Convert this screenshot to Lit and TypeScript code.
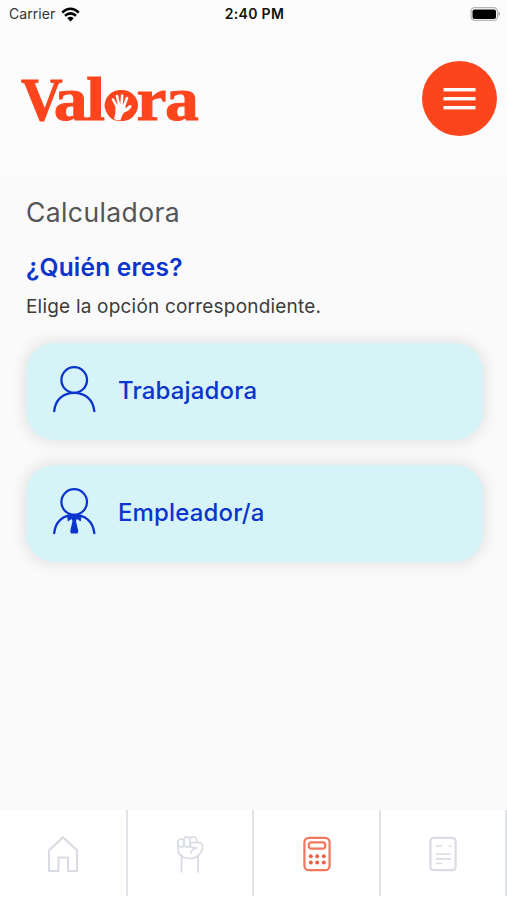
import { LitElement, html, css, svg } from "lit";
import { customElement } from "lit/decorators.js";

const BLUE = "#0b35cc";

const person = svg`
  <circle cx="22.2" cy="14" r="12.8" />
  <path d="M2.2 45.2C3.2 33.5 11.5 26.8 22.2 26.8S41.2 33.5 42.3 45.2" />`;

const tie = svg`
  <path d="M15 27.2L19.3 26.5 22.2 28 25.2 26.5 29.5 27.2 28.800 33.500 24.800 31 24 33 26.300 43.200 25.500 45.500H19L18.200 43.200 20.500 33 19.600 31 15.800 33.500Z" fill=${BLUE} stroke="none" />`;

@customElement("app-root")
export class AppRoot extends LitElement {
  static styles = css`
    :host {
      display: flex;
      flex-direction: column;
      width: 507px;
      height: 900px;
      overflow: hidden;
      background: #fafafa;
      font-family: Inter, "Liberation Sans", sans-serif;
      white-space: nowrap;
    }
    svg { display: block; flex: none; }
    .status {
      display: grid;
      grid-template-columns: 1fr auto 1fr;
      align-items: center;
      height: 28px;
      padding: 0 6px 0 9px;
      background: #fcfcfc;
      color: #111;
      font-size: 14px;
      line-height: 28px;
    }
    .carrier { display: flex; align-items: center; gap: 6px; color: #333; }
    .carrier-name { letter-spacing: 0.05px; }
    .time { margin-right: 1px; font-weight: 600; letter-spacing: 0.3px; }
    .battery { justify-self: end; }
    header {
      display: flex;
      justify-content: space-between;
      height: 148px;
      box-sizing: border-box;
      padding: 33px 10px 0 16px;
      background: #fcfcfc;
    }
    .wordmark {
      font-family: "Liberation Serif", serif;
      font-weight: 700;
      font-size: 62px;
      fill: #fd451d;
      stroke: #fd451d;
      stroke-width: 1;
    }
    .menu {
      display: flex;
      align-items: center;
      justify-content: center;
      width: 75px;
      height: 75px;
      border: 0;
      padding: 0;
      border-radius: 50%;
      background: #fd451d;
    }
    main { flex: 1; padding: 0 24px 0 26px; }
    h1, h2, p { margin: 0; }
    h1 {
      padding-top: 19px;
      font-size: 26.5px;
      line-height: 34px;
      font-weight: 400;
      letter-spacing: 0.4px;
      color: #555;
    }
    h2 {
      margin-top: 22px;
      font-size: 24.5px;
      line-height: 32px;
      font-weight: 600;
      letter-spacing: 0.2px;
      color: #0b35cc;
    }
    p {
      margin-top: 12px;
      font-size: 19px;
      line-height: 24px;
      letter-spacing: 0.2px;
      color: #3c3c3c;
    }
    .options { display: flex; flex-direction: column; gap: 25px; margin-top: 23.5px; }
    .option {
      display: flex;
      align-items: center;
      gap: 21px;
      height: 97px;
      padding: 0 0 0 26px;
      border: 0;
      border-radius: 28px;
      background: #d6f3f7;
      box-shadow: 0 0 14px 3px rgba(0, 0, 0, 0.09);
      color: #0b35cc;
      font: 500 24px/30px Inter, "Liberation Sans", sans-serif;
      letter-spacing: 0.15px;
    }
    .option svg { margin-bottom: 3px; }
    nav {
      display: grid;
      grid-template-columns: 128px 126px 127px 126px;
      height: 90px;
      background: #fff;
    }
    .tab {
      display: flex;
      align-items: center;
      justify-content: center;
      height: 86px;
      box-sizing: border-box;
      padding-top: 2px;
      border-right: 2px solid #e2e3e9;
    }
  `;

  private option(label: string, withTie: boolean) {
    return html`<div class="option" role="button">
      <svg width="45" height="48" viewBox="0 0 45 48" fill="none" stroke=${BLUE} stroke-width="2.3" stroke-linecap="round">
        ${person}${withTie ? tie : null}
      </svg>
      <span>${label}</span>
    </div>`;
  }

  render() {
    return html`
      <div class="status">
        <div class="carrier">
          <span class="carrier-name">Carrier</span>
          <svg width="19" height="15" viewBox="0 0 19 15" fill="none" stroke="#000" stroke-width="2.5">
            <path d="M1.200 5.600Q9.500 -2 17.800 5.600" />
            <path d="M4 8.800Q9.500 4 15 8.800" />
            <path d="M6.300 11.200Q9.500 8.400 12.700 11.200L9.500 14.400Z" fill="#000" stroke="none" />
          </svg>
        </div>
        <div class="time">2:40 PM</div>
        <svg class="battery" width="31" height="14" viewBox="0 0 31 14">
          <rect x="1" y="0.500" width="26.500" height="13" rx="4" fill="#fff" stroke="#b5b5b5" stroke-width="1.300" />
          <rect x="2.500" y="2.500" width="23.500" height="9.500" rx="2" fill="#000" />
          <path d="M28.600 4.800Q31.600 7 28.600 9.200Z" fill="#999" />
        </svg>
      </div>
      <header>
        <svg class="logo" width="200" height="90" viewBox="0 -9 200 90">
          <g class="wordmark">
            <text transform="translate(5 50) scale(0.93 1)">V</text>
            <text transform="translate(0 50) scale(1.09 1)" x="34.600 64.500 80.900 110.500 136.600">alora</text>
          </g>
          <ellipse cx="105.300" cy="35.200" rx="16.700" ry="15.300" fill="#fd451d" />
          <g fill="none" stroke="#fcfcfc" stroke-width="2.600" stroke-linecap="round">
            <path d="M101 37L97 29.500M103 35L101 26M105.500 35L106.200 25.500M108 36L111 28" />
            <path d="M107 41Q111 40.500 114 36.500" stroke-width="3" />
          </g>
          <path d="M99.500 35Q104 32.500 109 35.500L110.500 40Q106 44 104.500 50.300Q101 50.500 98 49Q100 43 99.500 35Z" fill="#fcfcfc" />
        </svg>
        <button class="menu" aria-label="Menú">
          <svg width="33" height="24" viewBox="0 0 33 24" fill="#fff">
            <rect x="0.500" y="1" width="32" height="3.400" />
            <rect x="0.500" y="10" width="32" height="3.400" />
            <rect x="0.500" y="19" width="32" height="3.400" />
          </svg>
        </button>
      </header>
      <main>
        <h1>Calculadora</h1>
        <h2>¿Quién eres?</h2>
        <p>Elige la opción correspondiente.</p>
        <div class="options">
          ${this.option("Trabajadora", false)}
          ${this.option("Empleador/a", true)}
        </div>
      </main>
      <nav>
        <div class="tab">
          <svg width="32" height="38" viewBox="0 0 32 38" fill="none" stroke="#d9dbe4" stroke-width="2">
            <path d="M2 15.200L16 2.200 30 15.200V36H21V22.500H11.500V36H2Z" stroke-linejoin="round" />
          </svg>
        </div>
        <div class="tab">
          <svg width="28" height="38" viewBox="0 0 28 38" fill="none" stroke="#d9dbe4" stroke-width="1.700" stroke-linecap="round" stroke-linejoin="round">
            <path d="M5.500 20V37M22 20V37" />
            <path d="M2 11C1 19.500 6 23.500 13.500 23.500C21 23.500 26.500 18 26.500 11C26.500 8.500 24.500 7.500 21.500 7.500H16C13 8 13.500 12.500 17 12.500L20.500 13Q15.500 14 15 18" />
            <rect x="2" y="4" width="6" height="8" rx="2.500" />
            <rect x="8" y="1.800" width="6" height="10.200" rx="2.500" />
            <path d="M14 3.500Q15 1.700 18 2Q21 2.500 21 7.300" />
          </svg>
        </div>
        <div class="tab">
          <svg width="28" height="36" viewBox="0 0 28 36" fill="none" stroke="#f4765f" stroke-width="2.200">
            <rect x="1.400" y="1.800" width="25.200" height="32.400" rx="4.500" />
            <rect x="5.800" y="6.300" width="16.400" height="6.400" rx="2.500" />
            <g fill="#ee6048" stroke="none">
              <circle cx="7.800" cy="20.200" r="2" /><circle cx="14.200" cy="20.200" r="2" /><circle cx="20.800" cy="20.200" r="2" />
              <circle cx="7.800" cy="26.500" r="2" /><circle cx="14.200" cy="26.500" r="2" /><circle cx="20.800" cy="26.500" r="2" />
            </g>
          </svg>
        </div>
        <div class="tab">
          <svg width="28" height="36" viewBox="0 0 28 36" fill="none" stroke="#dadbe4" stroke-width="2.200">
            <rect x="1.400" y="1.800" width="25.200" height="32.400" rx="3.500" />
            <path d="M7 10H13M20 10H22.500M7 18H22M7 22.800H22M7 27.500H13" stroke-width="1.700" />
          </svg>
        </div>
      </nav>
    `;
  }
}
